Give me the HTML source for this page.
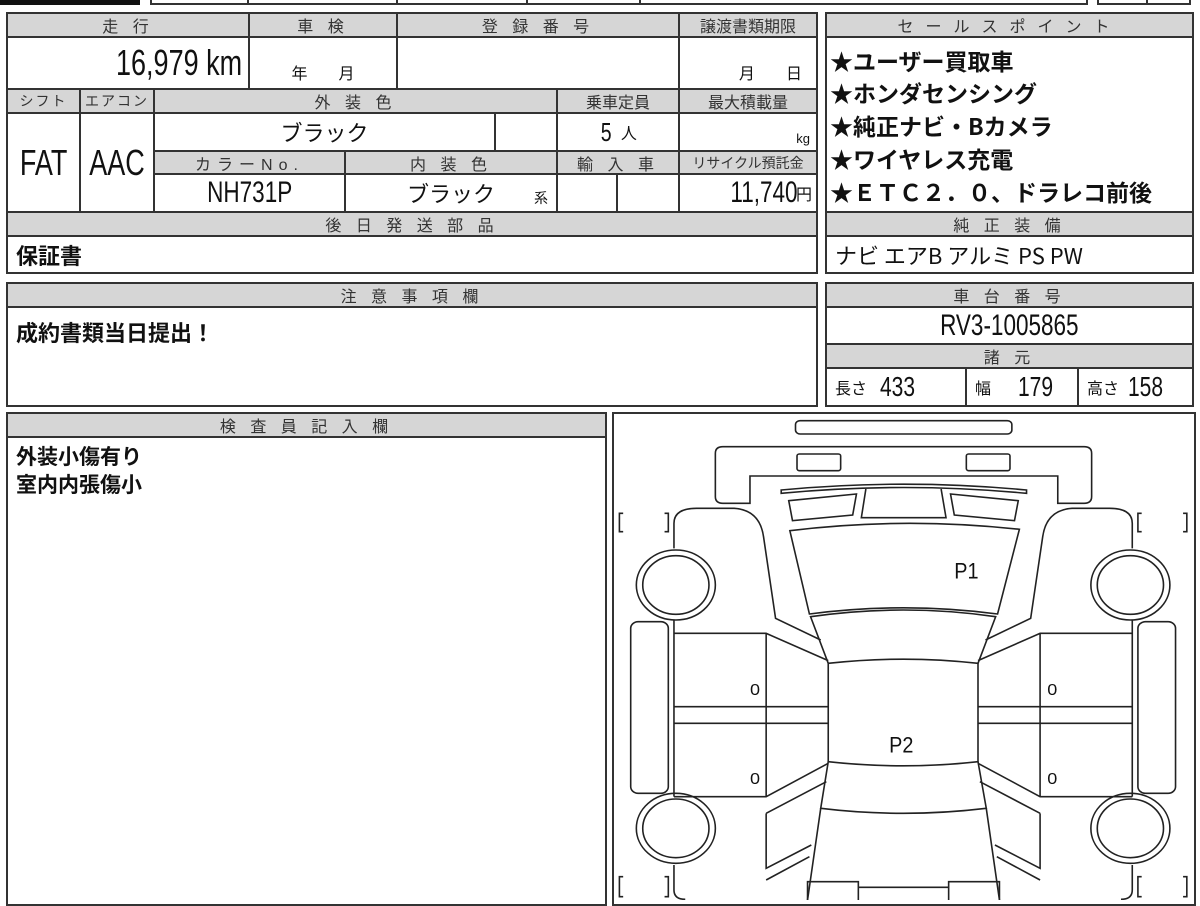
<!DOCTYPE html>
<html><head><meta charset="utf-8">
<style>
*{margin:0;padding:0;box-sizing:border-box}
body{width:1200px;height:900px;background:#fff;position:relative;overflow:hidden;font-family:"Liberation Sans","Noto Sans CJK JP",sans-serif;color:#111}
.c{position:absolute;border:2px solid #333;display:flex;align-items:center;justify-content:center;white-space:nowrap}
.h{background:#d6d6d6;color:#333;font-size:16px;letter-spacing:5px}
.v{background:#fff}
.n{display:inline-block;transform:scaleX(.75);font-family:"Liberation Sans",sans-serif}
.nr{transform-origin:right center}
.nl{transform-origin:left center}
.sp{position:absolute;left:830px;font-family:"Noto Sans CJK JP",sans-serif;font-weight:bold;font-size:23px;line-height:24px;white-space:nowrap}
</style></head><body>
<!-- top strip -->
<div style="position:absolute;left:0;top:0;width:140px;height:5px;background:#111"></div>
<div style="position:absolute;left:150px;top:-3px;width:938px;height:8px;border:2px solid #333"></div>
<div style="position:absolute;left:247px;top:0;width:2px;height:5px;background:#333"></div>
<div style="position:absolute;left:396px;top:0;width:2px;height:5px;background:#333"></div>
<div style="position:absolute;left:526px;top:0;width:2px;height:5px;background:#333"></div>
<div style="position:absolute;left:639px;top:0;width:2px;height:5px;background:#333"></div>
<div style="position:absolute;left:1097px;top:-3px;width:94px;height:8px;border:2px solid #333"></div>
<div style="position:absolute;left:1146px;top:0;width:2px;height:5px;background:#333"></div>

<!-- table 1 -->
<div class="c h" style="left:6px;top:12px;width:244px;height:26px">走 行</div>
<div class="c h" style="left:248px;top:12px;width:150px;height:26px">車 検</div>
<div class="c h" style="left:396px;top:12px;width:284px;height:26px">登 録 番 号</div>
<div class="c h" style="left:678px;top:12px;width:140px;height:26px;letter-spacing:0">譲渡書類期限</div>
<div class="c v" style="left:6px;top:36px;width:244px;height:54px;justify-content:flex-end;padding-right:6px;font-size:36px"><span class="n nr">16,979 km</span></div>
<div class="c v" style="left:248px;top:36px;width:150px;height:54px;align-items:flex-end;padding-bottom:4px;font-size:16px">年&nbsp;&nbsp;&nbsp;&nbsp;&nbsp;&nbsp;&nbsp;月</div>
<div class="c v" style="left:396px;top:36px;width:284px;height:54px"></div>
<div class="c v" style="left:678px;top:36px;width:140px;height:54px;align-items:flex-end;justify-content:flex-end;padding:0 14px 4px 0;font-size:16px">月&nbsp;&nbsp;&nbsp;&nbsp;&nbsp;&nbsp;&nbsp;日</div>

<div class="c h" style="left:6px;top:88px;width:75px;height:26px;letter-spacing:2px;font-size:14px">シフト</div>
<div class="c h" style="left:79px;top:88px;width:76px;height:26px;letter-spacing:2px;font-size:14px">エアコン</div>
<div class="c h" style="left:153px;top:88px;width:405px;height:26px">外 装 色</div>
<div class="c h" style="left:556px;top:88px;width:124px;height:26px;letter-spacing:0">乗車定員</div>
<div class="c h" style="left:678px;top:88px;width:140px;height:26px;letter-spacing:0">最大積載量</div>

<div class="c v" style="left:6px;top:112px;width:75px;height:101px;font-size:36px"><span class="n">FAT</span></div>
<div class="c v" style="left:79px;top:112px;width:76px;height:101px;font-size:36px"><span class="n">AAC</span></div>
<div class="c v" style="left:153px;top:112px;width:343px;height:40px;font-size:22px">ブラック</div>
<div class="c v" style="left:494px;top:112px;width:64px;height:40px"></div>
<div class="c v" style="left:556px;top:112px;width:124px;height:40px;font-size:26px"><span class="n">5</span>&nbsp;<span style="font-size:16px">人</span></div>
<div class="c v" style="left:678px;top:112px;width:140px;height:40px;justify-content:flex-end;align-items:flex-end;padding:0 6px 4px 0;font-size:13px">kg</div>

<div class="c h" style="left:153px;top:150px;width:193px;height:25px;letter-spacing:6px">カラーNo.</div>
<div class="c h" style="left:344px;top:150px;width:214px;height:25px">内 装 色</div>
<div class="c h" style="left:556px;top:150px;width:124px;height:25px">輸 入 車</div>
<div class="c h" style="left:678px;top:150px;width:140px;height:25px;letter-spacing:0;font-size:14px">リサイクル預託金</div>

<div class="c v" style="left:153px;top:173px;width:193px;height:40px;font-size:30px"><span class="n">NH731P</span></div>
<div class="c v" style="left:344px;top:173px;width:214px;height:40px;font-size:22px">ブラック<span style="position:absolute;right:8px;bottom:3px;font-size:14px">系</span></div>
<div class="c v" style="left:556px;top:173px;width:62px;height:40px"></div>
<div class="c v" style="left:616px;top:173px;width:64px;height:40px"></div>
<div class="c v" style="left:678px;top:173px;width:140px;height:40px;justify-content:flex-end;padding-right:4px;font-size:30px"><span class="n nr" style="margin-right:-2px">11,740</span><span style="font-size:16px">円</span></div>

<div class="c h" style="left:6px;top:211px;width:812px;height:26px">後 日 発 送 部 品</div>
<div class="c v" style="left:6px;top:235px;width:812px;height:39px;justify-content:flex-start;padding-left:8px;font-size:22px;font-weight:bold;font-family:'Noto Sans CJK JP',sans-serif">保証書</div>

<!-- right table -->
<div class="c h" style="left:825px;top:12px;width:369px;height:26px;letter-spacing:12px">セールスポイント</div>
<div class="c v" style="left:825px;top:36px;width:369px;height:177px"></div>
<div class="sp" style="top:48px">★ユーザー買取車</div>
<div class="sp" style="top:80px">★ホンダセンシング</div>
<div class="sp" style="top:113px">★純正ナビ・Bカメラ</div>
<div class="sp" style="top:146px">★ワイヤレス充電</div>
<div class="sp" style="top:179px">★ＥＴＣ２．０、ドラレコ前後</div>
<div class="c h" style="left:825px;top:211px;width:369px;height:26px">純 正 装 備</div>
<div class="c v" style="left:825px;top:235px;width:369px;height:39px;justify-content:flex-start;padding-left:8px;font-size:22px;font-family:'Noto Sans CJK JP',sans-serif">ナビ エアB アルミ PS PW</div>

<!-- row 2 -->
<div class="c h" style="left:6px;top:282px;width:812px;height:26px">注 意 事 項 欄</div>
<div class="c v" style="left:6px;top:306px;width:812px;height:101px;align-items:flex-start;justify-content:flex-start;padding:8px 0 0 8px;font-size:22px;font-weight:bold;font-family:'Noto Sans CJK JP',sans-serif">成約書類当日提出！</div>
<div class="c h" style="left:825px;top:282px;width:369px;height:26px">車 台 番 号</div>
<div class="c v" style="left:825px;top:306px;width:369px;height:39px;font-size:30px"><span class="n">RV3-1005865</span></div>
<div class="c h" style="left:825px;top:343px;width:369px;height:26px">諸 元</div>
<div class="c v" style="left:825px;top:367px;width:142px;height:40px;justify-content:flex-start;padding-left:8px;font-size:16px">長さ&nbsp;&nbsp;&nbsp;<span class="n nl" style="font-size:28px">433</span></div>
<div class="c v" style="left:965px;top:367px;width:114px;height:40px;justify-content:flex-start;padding-left:8px;font-size:16px">幅&nbsp;&nbsp;&nbsp;&nbsp;&nbsp;&nbsp;<span class="n nl" style="font-size:28px">179</span></div>
<div class="c v" style="left:1077px;top:367px;width:117px;height:40px;justify-content:flex-start;padding-left:8px;font-size:16px">高さ&nbsp;&nbsp;<span class="n nl" style="font-size:28px">158</span></div>

<!-- row 3 -->
<div class="c h" style="left:6px;top:412px;width:601px;height:26px">検 査 員 記 入 欄</div>
<div class="c v" style="left:6px;top:436px;width:601px;height:470px;align-items:flex-start;justify-content:flex-start;padding:4px 0 0 8px;font-size:21px;line-height:28px;font-weight:bold;white-space:normal;font-family:'Noto Sans CJK JP',sans-serif">外装小傷有り<br>室内内張傷小</div>
<div class="c v" style="left:612px;top:412px;width:584px;height:494px"></div>

<svg style="position:absolute;left:610px;top:410px" width="590" height="490" viewBox="0 0 1568 1470" preserveAspectRatio="none">
<g fill="none" stroke="#222" stroke-width="1.6" vector-effect="non-scaling-stroke">
<g vector-effect="non-scaling-stroke">
<rect x="493" y="32" width="575" height="40" rx="12" vector-effect="non-scaling-stroke"/>
<path vector-effect="non-scaling-stroke" d="M300,280 Q280,280 280,260 L280,130 Q280,110 300,110 L1260,110 Q1280,110 1280,130 L1280,260 Q1280,280 1260,280 L1190,280 L1190,198 L372,198 L372,280 Z"/>
<rect vector-effect="non-scaling-stroke" x="497" y="132" width="116" height="50" rx="6"/>
<rect vector-effect="non-scaling-stroke" x="947" y="132" width="116" height="50" rx="6"/>
<path vector-effect="non-scaling-stroke" d="M455,240 Q780,205 1107,240 L1107,250 Q780,215 455,250 Z"/>
<path vector-effect="non-scaling-stroke" d="M475,272 L655,252 L645,315 L485,332 Z"/>
<path vector-effect="non-scaling-stroke" d="M1085,272 L905,252 L915,315 L1075,332 Z"/>
<path vector-effect="non-scaling-stroke" d="M680,237 L668,323 L893,323 L880,237"/>
<path vector-effect="non-scaling-stroke" d="M478,362 Q780,320 1088,358 L1030,612 Q780,575 530,612 Z"/>
<path vector-effect="non-scaling-stroke" d="M533,620 Q780,580 1025,620 L978,760 Q780,735 580,760 Z"/>
<path vector-effect="non-scaling-stroke" d="M580,760 L580,1055 Q780,1080 978,1055 L978,760"/>
<path vector-effect="non-scaling-stroke" d="M580,1055 L560,1195 Q780,1225 1000,1195 L978,1055"/>
<path vector-effect="non-scaling-stroke" d="M560,1195 L525,1470 M1000,1195 L1035,1470"/>
<path vector-effect="non-scaling-stroke" d="M525,1470 L525,1415 L660,1415 L660,1470 M660,1432 L900,1432 M900,1470 L900,1415 L1035,1415 L1035,1470"/>
</g>
<g id="half">
<path vector-effect="non-scaling-stroke" d="M170,415 L170,340 Q170,295 230,295 L330,295 Q398,300 408,380 L440,625 L560,690"/>
<path vector-effect="non-scaling-stroke" d="M170,630 L170,1160 M170,670 L415,670 L580,752 M170,890 L580,890 M170,940 L580,940 M415,670 L415,1160 M170,1160 L415,1160 L580,1060"/>
<path vector-effect="non-scaling-stroke" d="M415,1210 L575,1115 M415,1210 L415,1375 L535,1305"/>
<path vector-effect="non-scaling-stroke" d="M170,1365 L170,1440 Q170,1468 200,1468 M415,1410 L530,1340"/>
<rect vector-effect="non-scaling-stroke" x="55" y="635" width="100" height="515" rx="20"/>
<ellipse vector-effect="non-scaling-stroke" cx="175" cy="525" rx="105" ry="105"/><ellipse vector-effect="non-scaling-stroke" cx="175" cy="525" rx="88" ry="88"/>
<ellipse vector-effect="non-scaling-stroke" cx="175" cy="1255" rx="105" ry="105"/><ellipse vector-effect="non-scaling-stroke" cx="175" cy="1255" rx="88" ry="88"/>
<path vector-effect="non-scaling-stroke" d="M35,310 L25,310 L25,365 L35,365 M145,310 L155,310 L155,365 L145,365"/>
<path vector-effect="non-scaling-stroke" d="M35,1400 L25,1400 L25,1460 L35,1460 M145,1400 L155,1400 L155,1460 L145,1460"/>
</g>
<use href="#half" transform="translate(1558,0) scale(-1,1)"/>
</g>
<g font-family="Liberation Sans, sans-serif" fill="#111">
<text x="915" y="505" font-size="66" transform="translate(915,0) scale(.8,1) translate(-915,0)">P1</text>
<text x="742" y="1027" font-size="66" transform="translate(742,0) scale(.8,1) translate(-742,0)">P2</text>
<text x="372" y="855" font-size="48">0</text>
<text x="372" y="1122" font-size="48">0</text>
<text x="1162" y="855" font-size="48">0</text>
<text x="1162" y="1122" font-size="48">0</text>
</g>
</svg>
</body></html>
